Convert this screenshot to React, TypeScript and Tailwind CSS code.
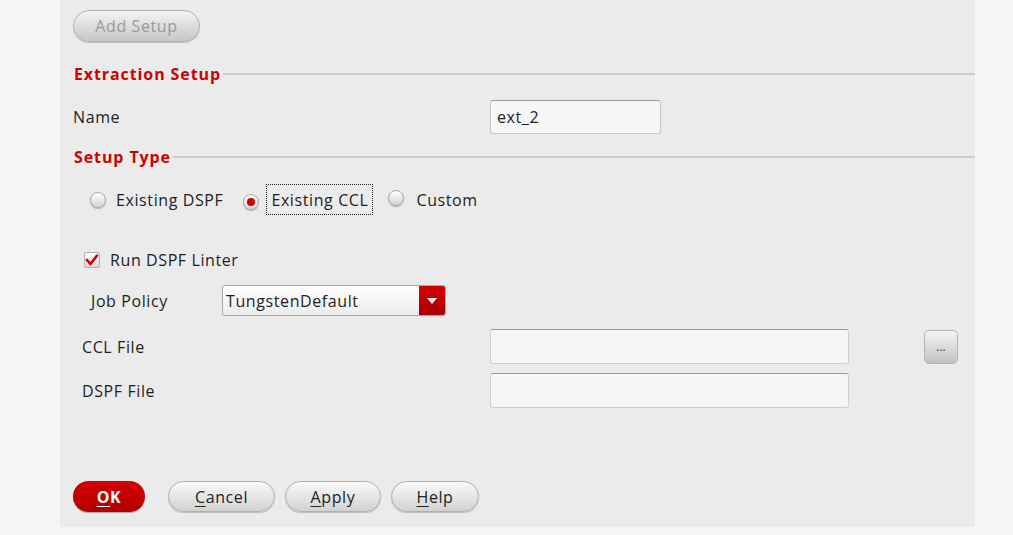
import React from "react";

const font = { fontFamily: '"Open Sans", "DejaVu Sans", sans-serif' };

function Radio({ checked }: { checked?: boolean }) {
  return (
    <span className="relative inline-flex h-[16px] w-[16px] items-center justify-center rounded-full border border-[#a8a8a8] bg-[linear-gradient(180deg,#ffffff,#d4d4d4)] shadow-[0_1px_1px_rgba(0,0,0,0.25)]">
      {checked && <span className="h-[8px] w-[8px] rounded-full bg-[#d40000]" />}
    </span>
  );
}

function Section({ title }: { title: string }) {
  return (
    <div className="flex items-center">
      <span className="text-[16px] font-bold tracking-[0.9px] text-[#d00000]">{title}</span>
      <div className="ml-[2px] h-[2px] flex-1 bg-[#cbcbcb]" />
    </div>
  );
}

function Btn({ children, w }: { children: React.ReactNode; w: string }) {
  return (
    <div
      className={`${w} flex h-[31px] items-center justify-center rounded-full border border-[#b0b0b0] bg-[linear-gradient(180deg,#fafafa,#e2e2e2_60%,#d2d2d2)] text-[#222] shadow-[0_1px_1px_rgba(0,0,0,0.2)]`}
    >
      {children}
    </div>
  );
}

export default function App() {
  return (
    <div className="min-h-[535px] w-[1013px] bg-[#f6f6f6]" style={font}>
      <div className="ml-[60px] flex h-[527px] w-[915px] flex-col bg-[#ebebeb] text-[16px] tracking-[0.6px] text-[#1e1e1e]">
        <div className="pl-[13px] pt-[10px]">
          <div className="flex h-[32px] w-[127px] items-center justify-center rounded-full border border-[#b3b3b3] bg-[linear-gradient(180deg,#f4f4f4,#d8d8d8_60%,#c8c8c8)] text-[#9a9a9a] shadow-[0_1px_1px_rgba(0,0,0,0.2)]">
            Add Setup
          </div>
        </div>
        <div className="mt-[20px] pl-[14px]">
          <Section title="Extraction Setup" />
        </div>
        <div className="mt-[14px] flex h-[34px] items-center pl-[13px]">
          <span className="w-[417px]">Name</span>
          <div className="flex h-[34px] w-[171px] items-center rounded-[3px] border border-[#c8c8c8] border-t-[#9a9a9a] bg-[#f6f6f6] pl-[6px]">
            ext_2
          </div>
        </div>
        <div className="mt-[11px] pl-[14px]">
          <Section title="Setup Type" />
        </div>
        <div className="mt-[15px] flex h-[31px] items-center pl-[30px]">
          <Radio />
          <span className="ml-[10px]">Existing DSPF</span>
          <span className="ml-[20px]"><Radio checked /></span>
          <span className="ml-[7px] flex h-[31px] items-center border border-dotted border-[#222] px-[4px]">Existing CCL</span>
          <span className="ml-[15px]"><Radio /></span>
          <span className="ml-[12px]">Custom</span>
        </div>
        <div className="mt-[35px] flex h-[20px] items-center pl-[24px]">
          <span className="flex h-[16px] w-[16px] items-center justify-center rounded-[2px] border border-[#b0b0b0] bg-[linear-gradient(180deg,#fff,#d6d6d6)]">
            <svg width="14" height="14" viewBox="0 0 14 14">
              <path d="M2 7 L5.5 11 L12 2.5" fill="none" stroke="#d00000" strokeWidth="2.6" strokeLinecap="round" strokeLinejoin="round" />
            </svg>
          </span>
          <span className="ml-[10px]">Run DSPF Linter</span>
        </div>
        <div className="mt-[15px] flex h-[31px] items-center pl-[31px]">
          <span className="w-[131px]">Job Policy</span>
          <div className="flex h-[31px] w-[224px] overflow-hidden rounded-[3px] border border-[#a8a8a8] bg-[linear-gradient(180deg,#ffffff,#ececec)]">
            <span className="flex flex-1 items-center pl-[3px]">TungstenDefault</span>
            <span className="flex w-[26px] items-center justify-center bg-[linear-gradient(180deg,#d20000,#aa0000)]">
              <svg width="10" height="6" viewBox="0 0 10 6"><path d="M0 0 H10 L5 6 Z" fill="#fff" /></svg>
            </span>
          </div>
        </div>
        <div className="mt-[13px] flex h-[35px] items-center pl-[22px]">
          <span className="w-[408px]">CCL File</span>
          <div className="h-[35px] w-[359px] rounded-[3px] border border-[#cfcfcf] border-t-[#9a9a9a] bg-[#f6f6f6]" />
          <div className="ml-[75px] flex h-[34px] w-[34px] items-center justify-center rounded-[5px] border border-[#b5b5b5] bg-[linear-gradient(180deg,#f4f4f4,#d6d6d6_60%,#c2c2c2)] text-[12px] leading-none tracking-normal text-[#444]">
            ...
          </div>
        </div>
        <div className="mt-[9px] flex h-[35px] items-center pl-[22px]">
          <span className="w-[408px]">DSPF File</span>
          <div className="h-[35px] w-[359px] rounded-[3px] border border-[#cfcfcf] border-t-[#9a9a9a] bg-[#f6f6f6]" />
        </div>
        <div className="mt-[73px] flex items-center pl-[13px]">
          <div className="flex h-[31px] w-[72px] items-center justify-center rounded-full bg-[linear-gradient(180deg,#d60000,#b00000)] font-bold text-white shadow-[0_1px_1px_rgba(0,0,0,0.3)]">
            <span className="underline underline-offset-[3px]">O</span>K
          </div>
          <div className="ml-[23px]">
            <Btn w="w-[107px]"><span className="underline underline-offset-[3px]">C</span>ancel</Btn>
          </div>
          <div className="ml-[10px]">
            <Btn w="w-[96px]"><span className="underline underline-offset-[3px]">A</span>pply</Btn>
          </div>
          <div className="ml-[10px]">
            <Btn w="w-[88px]"><span className="underline underline-offset-[3px]">H</span>elp</Btn>
          </div>
        </div>
      </div>
    </div>
  );
}
